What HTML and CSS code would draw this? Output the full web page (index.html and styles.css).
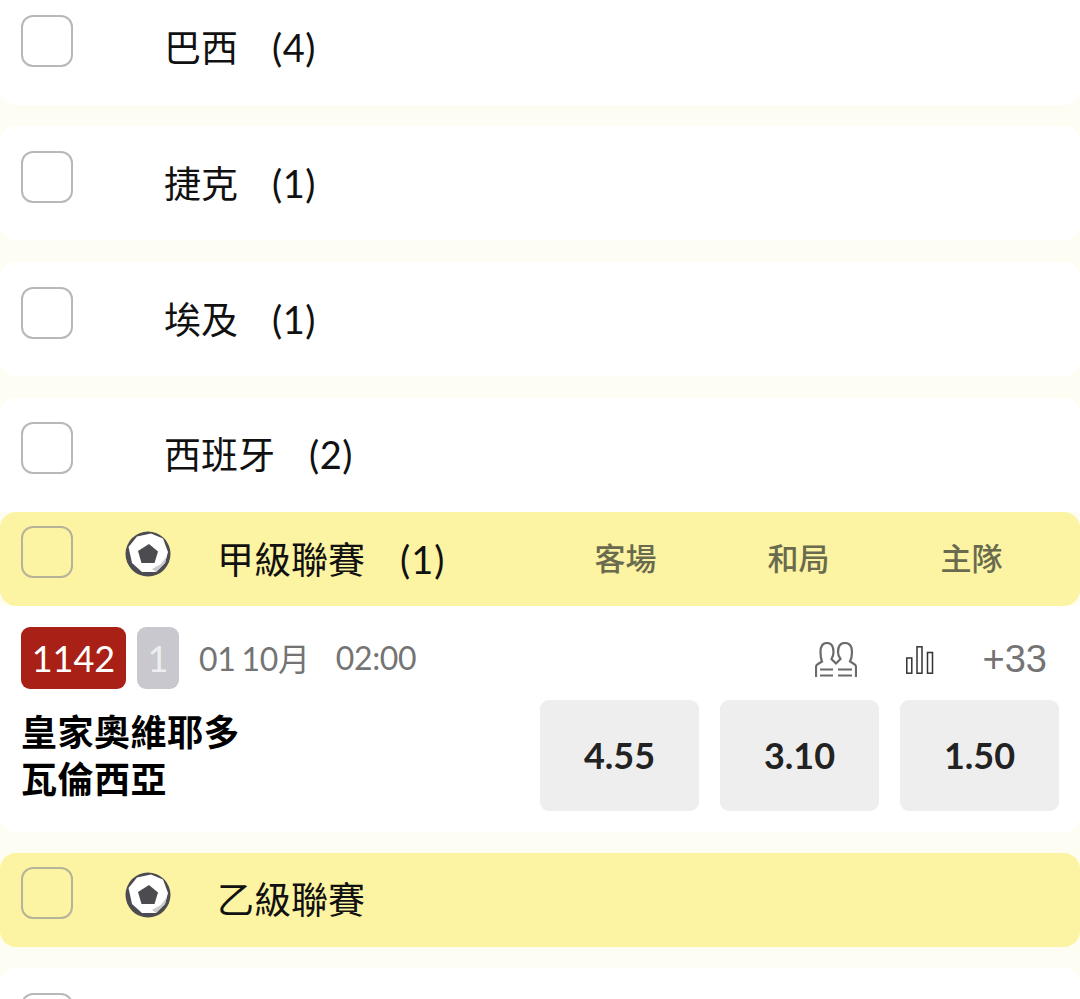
FILE: index.html
```html
<!DOCTYPE html>
<html lang="zh-Hant">
<head>
<meta charset="utf-8">
<title>聯賽</title>
<link rel="stylesheet" href="styles.css">
</head>
<body>
<svg class="defs" width="0" height="0" aria-hidden="true">
  <symbol id="ball" viewBox="0 0 46 46">
    <circle cx="23" cy="23" r="22.5" fill="#4b4b50"/>
    <path d="M3.5 16 L12 5.5 L26 2.5 L38 7.5 L43 21 L40 32 L31 41 L17 41 L7 32 Z" fill="#fff"/>
    <path d="M31 41 L40 32 L42 25 L36 33 L27 38 Z" fill="#c9cacc"/>
    <path d="M24 13 L33 20.5 L29.5 32 L16.5 32 L13 20 Z" fill="#4b4b50"/>
  </symbol>
</svg>

<section class="row first">
  <span class="box"></span>
  <span class="name">巴西<span class="count">(4)</span></span>
</section>
<section class="row">
  <span class="box"></span>
  <span class="name">捷克<span class="count">(1)</span></span>
</section>
<section class="row">
  <span class="box"></span>
  <span class="name">埃及<span class="count">(1)</span></span>
</section>
<section class="row flush">
  <span class="box"></span>
  <span class="name">西班牙<span class="count">(2)</span></span>
</section>

<header class="league">
  <span class="box"></span>
  <svg class="ball"><use href="#ball"/></svg>
  <span class="league-name">甲級聯賽<span class="count">(1)</span></span>
  <div class="cols">
    <span>客場</span><span>和局</span><span>主隊</span>
  </div>
</header>

<article class="match">
  <div class="meta">
    <span class="code">1142</span>
    <span class="num">1</span>
    <span class="date">01 10月</span>
    <span class="time">02:00</span>
    <div class="tools">
      <svg class="ico-people" viewBox="0 0 42 35" fill="none" stroke="#6a6a6a" stroke-width="2.2">
        <path d="M1 35 V25 Q1 23 3 22 L7 19.5 Q5.5 16 5.5 10 Q5.5 1 12 1 Q18.5 1 18.5 10 Q18.5 14 16.5 17 L21 21.5 L25.5 17 Q23 14 23 10 Q23 1 30 1 Q37 1 37 10 Q37 16 35 19.5 L39 22 Q41 23 41 25 V35"/>
        <path d="M5 27.5 H18 M5 33.5 H18 M23 27.5 H37 M23 33.5 H37"/>
      </svg>
      <svg class="ico-bars" viewBox="0 0 28 28" fill="none" stroke="#333" stroke-width="1.5">
        <rect x="0.8" y="12" width="5" height="15.2"/>
        <rect x="11" y="0.8" width="5" height="26.4"/>
        <rect x="21.5" y="6.5" width="5" height="20.7"/>
      </svg>
      <span class="more">+33</span>
    </div>
  </div>
  <div class="body">
    <div class="teams">
      <div>皇家奧維耶多</div>
      <div>瓦倫西亞</div>
    </div>
    <div class="odds">
      <span class="odd">4.55</span>
      <span class="odd">3.10</span>
      <span class="odd">1.50</span>
    </div>
  </div>
</article>

<header class="league spaced">
  <span class="box"></span>
  <svg class="ball"><use href="#ball"/></svg>
  <span class="league-name">乙級聯賽</span>
</header>

<section class="row tail">
  <span class="box"></span>
</section>
</body>
</html>
```
FILE: styles.css
```css
* { box-sizing: border-box; }
html, body { margin: 0; height: 999px; overflow: hidden; }
body {
  background: #fefdf4;
  color: #111;
  font-family: Lato, "Noto Sans CJK TC", sans-serif;
}
.defs { position: absolute; }

.box {
  flex: none;
  width: 52px;
  height: 52px;
  border: 2.5px solid #b8b8b8;
  border-radius: 12px;
  background: #fff;
}

.row {
  display: flex;
  align-items: flex-start;
  height: 114px;
  margin-bottom: 22px;
  padding: 25px 0 0 21px;
  background: #fff;
  border-radius: 16px;
}
.row.first { height: 105px; padding-top: 15px; border-radius: 0 0 16px 16px; margin-bottom: 21px; }
.row.flush { margin-bottom: 0; padding-top: 24px; border-radius: 16px 16px 0 0; }
.row.tail { margin: 21px 0 0; height: 60px; padding-top: 25px; }

.name {
  margin: 8px 0 0 91px;
  font-size: 37px;
  line-height: 48px;
  white-space: nowrap;
}
.count {
  margin-left: 34px;
  font-size: 38px;
  letter-spacing: 0.5px;
}

.league {
  display: flex;
  align-items: center;
  height: 94px;
  padding: 0 0 0 21px;
  background: #fcf4a3;
  border-radius: 16px;
}
.league .box { background: transparent; border-color: #b6b39a; margin-top: -14px; }
.league.spaced { margin-top: 21px; }
.ball { flex: none; width: 46px; height: 46px; margin: -10px 0 0 52px; }
.league-name {
  margin-left: 46px;
  font-size: 37px;
  line-height: 48px;
  white-space: nowrap;
  flex: 1;
}
.league-name .count { margin-left: 35px; letter-spacing: 1px; }
.cols {
  display: flex;
  width: 519px;
}
.cols span {
  width: 173px;
  text-align: center;
  font-size: 31px;
  font-weight: 500;
  color: #6a6a4e;
  transform: translate(-22px, -3px);
}

.match {
  height: 226px;
  background: #fff;
  padding: 21px 21px 0;
  border-radius: 0 0 16px 16px;
}
.meta {
  display: flex;
  align-items: center;
  height: 62px;
  color: #747474;
}
.code {
  width: 105px;
  height: 62px;
  background: #a92116;
  color: #fff;
  border-radius: 9px;
  text-align: center;
  font-size: 36px;
  line-height: 62px;
}
.num {
  width: 42px;
  height: 62px;
  margin-left: 11px;
  background: #c8c8ce;
  color: #eeeef0;
  border-radius: 9px;
  text-align: center;
  font-size: 36px;
  line-height: 62px;
}
.date { margin-left: 20px; font-size: 32px; letter-spacing: -0.3px; word-spacing: -2px; transform: translateY(-1px); }
.time { margin-left: 26px; font-size: 32px; letter-spacing: -0.3px; transform: translateY(-1px); }
.tools {
  margin-left: auto;
  display: flex;
  align-items: center;
  padding-right: 12px;
}
.ico-people { width: 42px; height: 35px; margin-top: 2px; }
.ico-bars { width: 28px; height: 28px; margin-left: 49px; margin-top: 4px; }
.more { margin-left: 49px; font-size: 38px; font-family: "Liberation Sans", sans-serif; transform: translateY(1px); }

.body {
  display: flex;
  justify-content: space-between;
  margin-top: 11px;
}
.teams {
  padding-top: 9px;
  font-size: 36px;
  letter-spacing: 0.5px;
  line-height: 47px;
  font-weight: 700;
  color: #000;
}
.odds { display: flex; gap: 21px; }
.odd {
  width: 159px;
  height: 111px;
  background: #eeeeee;
  border-radius: 9px;
  text-align: center;
  font-size: 36px;
  line-height: 111px;
  font-weight: 700;
  color: #222;
}
```
